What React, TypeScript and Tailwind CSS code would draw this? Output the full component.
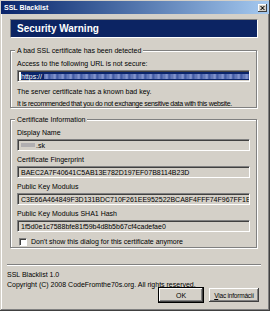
import React from 'react'

const font = { fontFamily: '"Liberation Sans", Arial, sans-serif' }

// sunken read-only text box (classic 3D border)
function Field({ children, white }: { children: React.ReactNode; white?: boolean }) {
  return (
    <div
      className={`h-[12px] flex items-center overflow-hidden whitespace-nowrap pl-[3px] border-t border-l border-t-[#808080] border-l-[#808080] border-b border-r border-b-white border-r-white shadow-[inset_1px_1px_#404040,inset_-1px_-1px_#d4d0c8] ${
        white ? 'bg-white' : 'bg-[#d4d0c8]'
      }`}
    >
      {children}
    </div>
  )
}

function Group({ legend, children, className }: { legend: string; children: React.ReactNode; className?: string }) {
  return (
    <div className={`relative ml-[9px] mr-[12px] border border-[#808080] shadow-[inset_1px_1px_white,1px_1px_white] ${className ?? ''}`}>
      <span className="absolute -top-[5px] left-[4px] bg-[#d4d0c8] px-[2px] leading-[9px]">{legend}</span>
      {children}
    </div>
  )
}

export default function App() {
  return (
    <div
      style={font}
      className="w-[270px] h-[311px] bg-[#d4d0c8] text-[7px] leading-[9px] text-black flex flex-col p-[1px] shadow-[inset_-1px_-1px_#404040,inset_1px_1px_#d4d0c8,inset_-2px_-2px_#808080,inset_2px_2px_white] overflow-hidden"
    >
      {/* Title bar */}
      <div className="h-[13px] flex items-center justify-between pl-[3px] pr-[2px] bg-gradient-to-r from-[#0a246a] to-[#a6caf0]">
        <span className="text-white font-bold text-[7px]">SSL Blacklist</span>
        <div className="w-[9px] h-[8px] bg-[#d4d0c8] flex items-center justify-center shadow-[inset_-1px_-1px_#404040,inset_1px_1px_white]">
          <svg width="5" height="4" viewBox="0 0 5 4">
            <path d="M0 0h1l1.5 1.2L4 0h1L3 2l2 2H4L2.5 2.8 1 4H0l2-2z" fill="black" />
          </svg>
        </div>
      </div>

      {/* Banner */}
      <div className="mt-[5px] ml-[9px] mr-[11px] h-[19px] bg-[#0c2463] border border-t-[#808080] border-l-[#808080] border-b-white border-r-white flex items-center pl-[6px]">
        <span className="text-white font-bold text-[10px]">Security Warning</span>
      </div>

      <Group legend="A bad SSL certificate has been detected" className="mt-[12px] h-[58px] px-[6px] pt-[8px]">
        <div>Access to the following URL is not secure:</div>
        <div className="mt-[2px]">
          <Field white>
            <span className="bg-[#0a246a] text-white flex items-center h-[8px] w-full">
              <span>https://</span>
              <span className="ml-[2px] h-[5px] flex-1 bg-[repeating-linear-gradient(90deg,#5a6fb0_0px,#8a9bd2_3px,#3c55a0_5px,#6a80c0_8px)] blur-[0.4px]" />
            </span>
          </Field>
        </div>
        <div className="mt-[5px]">The server certificate has a known bad key.</div>
        <div className="mt-[3px] whitespace-nowrap tracking-[-0.3px]">
          It is recommended that you do not exchange sensitive data with this website.
        </div>
      </Group>

      <Group legend="Certificate Information" className="mt-[11px] h-[129px] px-[6px] pt-[8px]">
        <div>Display Name</div>
        <div className="mt-[2px]">
          <Field>
            <span className="w-[14px] h-[4px] bg-[#b0aeb0] blur-[0.6px] mr-[1px]" />
            <span>.sk</span>
          </Field>
        </div>
        <div className="mt-[4px]">Certificate Fingerprint</div>
        <div className="mt-[2px]">
          <Field>BAEC2A7F40641C5AB13E782D197EF07B8114B23D</Field>
        </div>
        <div className="mt-[4px]">Public Key Modulus</div>
        <div className="mt-[2px]">
          <Field>C3E66A464849F3D131BDC710F261EE952522BCA8F4FFF74F967FF1EACA12B3C4</Field>
        </div>
        <div className="mt-[4px]">Public Key Modulus SHA1 Hash</div>
        <div className="mt-[2px]">
          <Field>1f5d0e1c7588bfe81f59b4d8b5b67cf4cadefae0</Field>
        </div>
        <label className="mt-[5px] flex items-center gap-[4px] pl-[2px]">
          <span className="w-[8px] h-[8px] bg-white border-t border-l border-t-[#808080] border-l-[#808080] border-b border-r border-b-white border-r-white shadow-[inset_1px_1px_#404040]" />
          <span>Don't show this dialog for this certificate anymore</span>
        </label>
      </Group>

      {/* Separator */}
      <div className="mt-[16px] ml-[6px] mr-[8px] h-[2px] border-t border-t-[#808080] border-b border-b-white" />

      <div className="mt-[4px] ml-[6px]">
        <div>SSL Blacklist 1.0</div>
        <div className="mt-[1px]">Copyright (C) 2008 CodeFromthe70s.org. All rights reserved.</div>
      </div>

      <div className="-mt-[1px] flex justify-end gap-[6px] pr-[10px]">
        <button className="w-[44px] h-[14px] bg-[#d4d0c8] shadow-[inset_-1px_-1px_#404040,inset_1px_1px_white,inset_-2px_-2px_#808080,0_0_0_1px_black]">
          OK
        </button>
        <button className="w-[50px] h-[14px] bg-[#d4d0c8] whitespace-nowrap text-[6.5px] tracking-[-0.2px] shadow-[inset_-1px_-1px_#404040,inset_1px_1px_white,inset_-2px_-2px_#808080]">
          <span className="underline">V</span>iac informácií
        </button>
      </div>
    </div>
  )
}
